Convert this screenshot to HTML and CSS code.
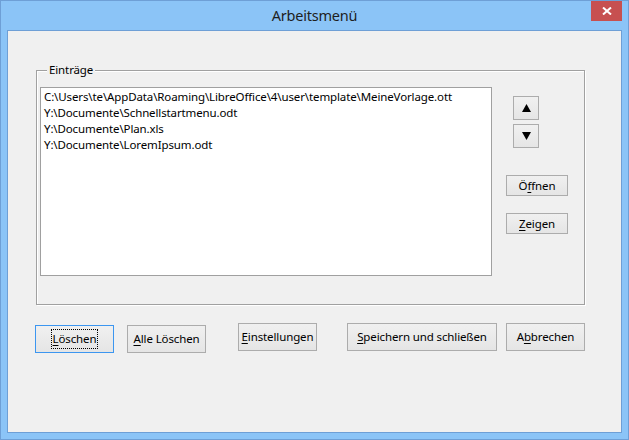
FILE: index.html
```html
<!DOCTYPE html>
<html lang="de">
<head>
<meta charset="utf-8">
<title>Arbeitsmenü</title>
<link rel="stylesheet" href="styles.css">
</head>
<body>
<div class="window">
  <div class="titlebar">
    <span class="title">Arbeitsmenü</span>
    <div class="close">
      <svg width="10" height="8" viewBox="0 0 10 8"><path d="M1 0.5 L9 7.5 M9 0.5 L1 7.5" stroke="#fff" stroke-width="2"/></svg>
    </div>
  </div>
  <div class="client">
    <div class="group">
      <span class="group-label">Einträge</span>
      <div class="list">
        <div class="item">C:\Users\te\AppData\Roaming\LibreOffice\4\user\template\MeineVorlage.ott</div>
        <div class="item">Y:\Documente\Schnellstartmenu.odt</div>
        <div class="item">Y:\Documente\Plan.xls</div>
        <div class="item">Y:\Documente\LoremIpsum.odt</div>
      </div>
      <div class="side">
        <button class="btn btn-arrow"><svg width="9" height="8" viewBox="0 0 9 8"><path d="M4.5 0 L9 8 L0 8 Z" fill="#000"/></svg></button>
        <button class="btn btn-arrow btn-down"><svg width="9" height="8" viewBox="0 0 9 8"><path d="M0 0 L9 0 L4.5 8 Z" fill="#000"/></svg></button>
        <button class="btn btn-side btn-open">Ö<u>f</u>fnen</button>
        <button class="btn btn-side btn-show"><u>Z</u>eigen</button>
      </div>
    </div>
    <div class="actions">
      <button class="btn btn-action btn-default"><span class="focus"><u>L</u>öschen</span></button>
      <button class="btn btn-action btn-low gap-13"><u>A</u>lle Löschen</button>
      <button class="btn btn-action gap-32"><u>E</u>instellungen</button>
      <button class="btn btn-action btn-wide gap-30"><u>S</u>peichern und schließen</button>
      <button class="btn btn-action gap-9">A<u>b</u>brechen</button>
    </div>
  </div>
</div>
</body>
</html>
```
FILE: styles.css
```css
* { box-sizing: border-box; }
html, body { margin: 0; padding: 0; }
body {
  font-family: "Noto Sans", "Open Sans", sans-serif;
  font-size: 11.5px;
  letter-spacing: -0.12px;
  color: #000;
  background: #8bc4f7;
}
.window {
  width: 629px;
  height: 440px;
  border: 1px solid #6e9fd6;
  background: #8bc4f7;
  padding: 0 6px 6px 6px;
  display: flex;
  flex-direction: column;
}
.titlebar {
  height: 29px;
  flex: none;
  position: relative;
  display: flex;
  align-items: center;
  justify-content: center;
}
.title {
  font-size: 14.5px;
  letter-spacing: -0.2px;
  color: #1e1e1e;
  line-height: 20px;
  margin-top: -2px;
}
.close {
  position: absolute;
  right: 0;
  top: 0;
  width: 31px;
  height: 20px;
  background: #c75050;
  display: flex;
  align-items: center;
  justify-content: center;
}
.client {
  flex: 1;
  border: 1px solid #6e9fd6;
  background: #f0f0f0;
  padding: 39px 0 0 27px;
}
.group {
  position: relative;
  margin-left: 1px;
  width: 549px;
  height: 235px;
  border: 1px solid #a0a0a0;
  box-shadow: 1px 1px 0 #fff, inset 1px 1px 0 #fff;
  padding: 16px 0 0 3px;
  display: flex;
  align-items: flex-start;
}
.group-label {
  position: absolute;
  left: 10px;
  top: -9px;
  padding: 0 2px;
  line-height: 16px;
  background: #f0f0f0;
}
.list {
  width: 452px;
  height: 189px;
  background: #fff;
  border: 1px solid #a0a0a0;
  padding: 1px 0 0 3px;
}
.item {
  line-height: 16px;
  white-space: nowrap;
}
.side {
  margin-left: 14px;
  padding-top: 9px;
  display: flex;
  flex-direction: column;
  align-items: flex-start;
}
.btn {
  font: inherit;
  letter-spacing: inherit;
  color: #000;
  border: 1px solid #acacac;
  background: linear-gradient(#f0f0f0, #e5e5e5);
  padding: 0;
  margin: 0;
  display: flex;
  align-items: center;
  justify-content: center;
  line-height: 16px;
}
.btn u { text-underline-offset: 2px; }
.btn-arrow {
  width: 26px;
  height: 24px;
  margin-left: 7px;
}
.btn-down { margin-top: 4px; }
.btn-side {
  width: 62px;
  height: 21px;
}
.btn-open { margin-top: 27px; }
.btn-show { margin-top: 17px; }
.actions {
  margin-top: 18px;
  display: flex;
  align-items: flex-start;
}
.btn-action {
  width: 79px;
  height: 28px;
}
.btn-wide { width: 150px; }
.btn-default {
  margin-top: 2px;
  border-color: #3c96f0;
}
.btn-low { margin-top: 2px; }
.gap-13 { margin-left: 13px; }
.gap-32 { margin-left: 32px; }
.gap-30 { margin-left: 30px; }
.gap-9 { margin-left: 9px; }
.focus {
  outline: 1px dotted #000;
  outline-offset: 0;
  padding: 1px 1px;
}
```
